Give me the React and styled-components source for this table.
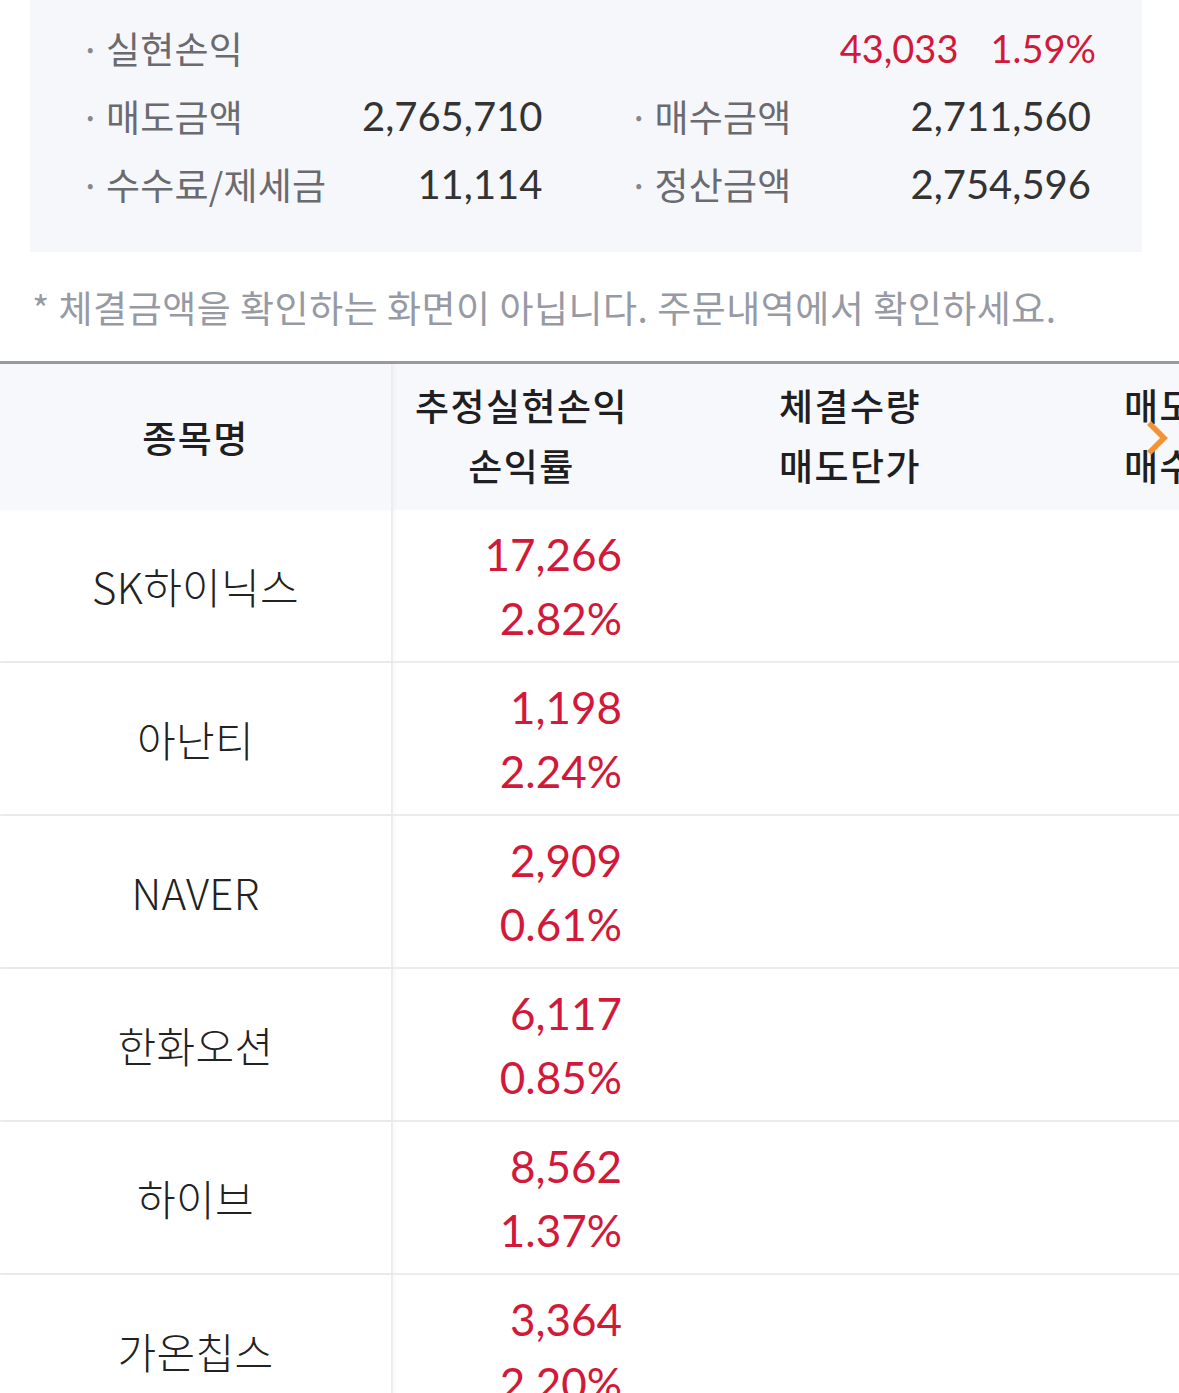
import styled, {createGlobalStyle} from "styled-components";

const GlobalStyle = createGlobalStyle`
  html, body {
    margin: 0;
    padding: 0;
    background: #fff;
  }
  body {
    font-family: "Noto Sans CJK KR", "Noto Sans", sans-serif;
    color: #222;
  }
`;

const summary = {
    realized: {amount: '43,033', rate: '1.59%'},
    rows: [
        [{label: '매도금액', value: '2,765,710'}, {label: '매수금액', value: '2,711,560'}],
        [{label: '수수료/제세금', value: '11,114'}, {label: '정산금액', value: '2,754,596'}],
    ],
};

const stocks = [
    {name: 'SK하이닉스', pl: '17,266', rate: '2.82%'},
    {name: '아난티', pl: '1,198', rate: '2.24%'},
    {name: 'NAVER', pl: '2,909', rate: '0.61%'},
    {name: '한화오션', pl: '6,117', rate: '0.85%'},
    {name: '하이브', pl: '8,562', rate: '1.37%'},
    {name: '가온칩스', pl: '3,364', rate: '2.20%'},
];

const App = () => {
    return (
        <>
            <GlobalStyle/>
            <Page>
                <SummaryBox>
                    <FirstRow>
                        <Label>실현손익</Label>
                        <RedValues>
                            <RedNumber>{summary.realized.amount}</RedNumber>
                            <RedNumber>{summary.realized.rate}</RedNumber>
                        </RedValues>
                    </FirstRow>
                    {summary.rows.map((row, i) => (
                        <SummaryRow key={i}>
                            {row.map(item => (
                                <Pair key={item.label}>
                                    <Label>{item.label}</Label>
                                    <Amount>{item.value}</Amount>
                                </Pair>
                            ))}
                        </SummaryRow>
                    ))}
                </SummaryBox>

                <Note>* 체결금액을 확인하는 화면이 아닙니다. 주문내역에서 확인하세요.</Note>

                <Table>
                    <HeaderRow>
                        <NameCell $header>종목명</NameCell>
                        <HeadCell $width={257}>
                            <span>추정실현손익</span>
                            <span>손익률</span>
                        </HeadCell>
                        <HeadCell $width={400}>
                            <span>체결수량</span>
                            <span>매도단가</span>
                        </HeadCell>
                        <HeadCell $width={290}>
                            <span>매도금액</span>
                            <span>매수금액</span>
                        </HeadCell>
                        <ScrollHint>
                            <svg width="24" height="36" viewBox="0 0 24 36">
                                <polyline points="4,3 19,18 4,33" fill="none" stroke="#f29435"
                                          strokeWidth="5.5" strokeLinejoin="miter"/>
                            </svg>
                        </ScrollHint>
                    </HeaderRow>
                    {stocks.map(s => (
                        <BodyRow key={s.name}>
                            <NameCell>{s.name}</NameCell>
                            <ValueCell $width={257}>
                                <span>{s.pl}</span>
                                <span>{s.rate}</span>
                            </ValueCell>
                            <ValueCell $width={400}/>
                            <ValueCell $width={290}/>
                        </BodyRow>
                    ))}
                </Table>
            </Page>
        </>
    );
};

const Page = styled.div`
  width: 1179px;
  height: 1393px;
  overflow: hidden;
`;

const SummaryBox = styled.section`
  margin: 0 37px 0 30px;
  padding: 14px 51px 34px 50px;
  background: #f6f7fb;
`;

const FirstRow = styled.div`
  display: flex;
  justify-content: space-between;
  align-items: center;
  height: 68px;
  margin-right: -5px;
`;

const SummaryRow = styled.div`
  display: grid;
  grid-template-columns: 1fr 1fr;
  column-gap: 86px;
  height: 68px;
`;

const Pair = styled.div`
  display: flex;
  justify-content: space-between;
  align-items: center;
`;

const Label = styled.span`
  font-size: 37px;
  letter-spacing: 0.2px;
  color: #6b6b6f;
  white-space: nowrap;

  &::before {
    content: '·';
    display: inline-block;
    width: 26px;
    letter-spacing: 0;
    color: #888;
  }
`;

const Amount = styled.span`
  font-family: Lato, "Liberation Sans", sans-serif;
  font-size: 40px;
  color: #333;
`;

const RedValues = styled.div`
  display: flex;
  gap: 32px;
`;

const RedNumber = styled.span`
  font-family: Lato, "Liberation Sans", sans-serif;
  font-size: 38px;
  color: #d2193a;
`;

const Note = styled.p`
  margin: 0;
  padding: 28px 0 0 32px;
  height: 81px;
  font-size: 37px;
  letter-spacing: 0.5px;
  color: #979aa5;
  white-space: nowrap;
`;

const Table = styled.div`
  border-top: 3px solid #999a9e;
  width: 1340px;
`;

const HeaderRow = styled.div`
  position: relative;
  display: flex;
  height: 146px;
  background: #f7f8fc;
`;

const BodyRow = styled.div`
  display: flex;
  height: 151px;
  border-bottom: 2px solid #ececee;
`;

const NameCell = styled.div`
  flex: 0 0 393px;
  display: flex;
  align-items: center;
  justify-content: center;
  border-right: 2px solid #ededf0;
  box-shadow: 3px 0 3px rgba(0, 0, 0, 0.025);
  font-size: ${p => p.$header ? '37px' : '42px'};
  font-weight: ${p => p.$header ? 500 : 300};
  letter-spacing: ${p => p.$header ? '1.5px' : '0.3px'};
  color: ${p => p.$header ? '#1f1f22' : '#222'};
  box-sizing: border-box;
`;

const HeadCell = styled.div`
  flex: 0 0 ${p => p.$width}px;
  display: flex;
  flex-direction: column;
  justify-content: center;
  align-items: center;
  font-size: 37px;
  font-weight: 500;
  line-height: 60px;
  letter-spacing: 1.5px;
  color: #1f1f22;
  padding-bottom: 4px;
  box-sizing: border-box;
`;

const ValueCell = styled.div`
  flex: 0 0 ${p => p.$width}px;
  display: flex;
  flex-direction: column;
  justify-content: center;
  align-items: flex-end;
  padding-right: 28px;
  box-sizing: border-box;
  font-family: Lato, "Liberation Sans", sans-serif;
  font-size: 44px;
  line-height: 64px;
  color: #d2193a;
`;

const ScrollHint = styled.div`
  position: absolute;
  left: 1145px;
  top: 56px;
  line-height: 0;
`;

export default App;
